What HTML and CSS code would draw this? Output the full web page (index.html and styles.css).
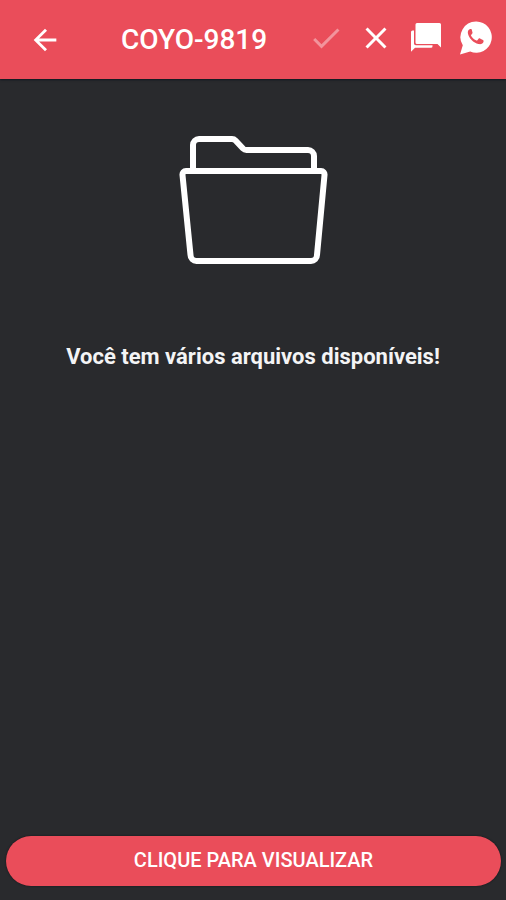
FILE: index.html
```html
<!DOCTYPE html>
<html lang="pt-BR">
<head>
<meta charset="utf-8">
<meta name="viewport" content="width=device-width, initial-scale=1">
<title>COYO-9819</title>
<link rel="stylesheet" href="styles.css">
</head>
<body>
<header class="bar">
  <button class="icon-button" type="button" aria-label="Voltar">
    <svg class="icon icon-back" viewBox="0 0 24 24"><path d="M20 11H7.83l5.59-5.59L12 4l-8 8 8 8 1.41-1.41L7.83 13H20z"/></svg>
  </button>
  <h1 class="title">COYO-9819</h1>
  <div class="actions">
    <button class="icon-button" type="button" aria-label="Confirmar" disabled>
      <svg class="icon" viewBox="0 0 24 24"><path d="M9 16.17 4.83 12l-1.42 1.41L9 19 21 7l-1.41-1.41z"/></svg>
    </button>
    <button class="icon-button" type="button" aria-label="Fechar">
      <svg class="icon" viewBox="0 0 24 24"><path d="M19 6.41 17.59 5 12 10.59 6.41 5 5 6.41 10.59 12 5 17.59 6.41 19 12 13.41 17.59 19 19 17.59 13.41 12z"/></svg>
    </button>
    <button class="icon-button" type="button" aria-label="Mensagens">
      <svg class="icon" viewBox="0 0 36 36"><path d="M9 3H31.500a1.500 1.500 0 0 1 1.500 1.500V27.500L29.500 24H9a1.500 1.500 0 0 1-1.500-1.500v-18A1.500 1.500 0 0 1 9 3z"/><path d="M3 12a1.500 1.500 0 0 1 1.500-1.500H6V23.500a1.800 1.800 0 0 0 1.800 1.800H24.500v1a1.500 1.500 0 0 1-1.500 1.500H7L3 31.800z"/></svg>
    </button>
    <button class="icon-button" type="button" aria-label="WhatsApp">
      <svg class="icon" viewBox="0 0 36 36"><path fill-rule="evenodd" d="M18.300 1.500a15.600 15.600 0 1 1-6.100 30L2 34.500l2.800-9.200A15.600 15.600 0 0 1 18.300 1.500zM13.800 9.800c-.4-.8-1-.7-1.500-.7-2 .6-2.700 2.400-2.400 4.200.7 4.800 5.700 9.700 10.600 10.700 2.500.5 4.600-.3 5-2.300.2-1 .1-1.400-.5-1.800l-3-1.500c-.6-.3-1-.2-1.400.3l-1.200 1.500c-.4.4-.8.4-1.400.1-2.100-.9-3.700-2.500-4.800-4.400-.3-.5-.2-.8.1-1.200l1-1.300c.3-.4.300-.7.100-1.200z"/></svg>
    </button>
  </div>
</header>
<main class="content">
  <svg class="folder" viewBox="0 0 150 130" aria-hidden="true">
    <path d="M15 35V10a6 6 0 0 1 6-6H54a5 5 0 0 1 3.500 1.500L65 13.500a5 5 0 0 0 3.500 1.500H130a6 6 0 0 1 6 6V35"/>
    <path d="M8 36H143a3.500 3.500 0 0 1 3.500 4L139 120a6 6 0 0 1-6 6H18.500a6 6 0 0 1-6-6L4.500 40A3.500 3.500 0 0 1 8 36z"/>
  </svg>
  <p class="message">Você tem vários arquivos disponíveis!</p>
</main>
<footer class="footer">
  <button class="primary" type="button">CLIQUE PARA VISUALIZAR</button>
</footer>
</body>
</html>
```
FILE: styles.css
```css
* {
  box-sizing: border-box;
}

body {
  margin: 0;
  min-height: 100vh;
  display: flex;
  flex-direction: column;
  background: #292a2d;
  color: #fff;
  font-family: Roboto, sans-serif;
  font-weight: 500;
}

.bar {
  display: flex;
  align-items: center;
  height: 79px;
  padding: 0 5px 0 20px;
  background: #ea4d5a;
  box-shadow: 0 1px 2px #101820;
}

.icon-button {
  display: flex;
  align-items: center;
  justify-content: center;
  width: 50px;
  height: 50px;
  padding: 0;
  border: 0;
  background: none;
  color: inherit;
}

.icon-button:disabled {
  opacity: 0.4;
}

.icon {
  width: 36px;
  height: 36px;
  fill: currentColor;
}

.icon-back {
  width: 34px;
  height: 34px;
}

.title {
  flex: 1;
  margin: 0 0 0 51px;
  font-size: 28px;
  line-height: 32px;
  font-weight: 500;
  white-space: nowrap;
}

.actions {
  display: flex;
  padding-bottom: 4px;
}

.content {
  flex: 1;
  display: flex;
  flex-direction: column;
  align-items: center;
  padding: 56px 16px 16px;
}

.folder {
  width: 150px;
  height: 130px;
  fill: none;
  stroke: #fff;
  stroke-width: 6;
}

.message {
  margin: 78px 0 0;
  color: #f4f4f5;
  font-size: 22px;
  line-height: 28px;
  font-weight: 700;
  text-align: center;
}

.footer {
  padding: 0 5px 14px 6px;
}

.primary {
  display: block;
  width: 100%;
  height: 50px;
  padding: 0 16px 2px;
  border: 0;
  border-radius: 25px;
  background: #ea4d5a;
  box-shadow: 0 0 2px #101418;
  color: #fff;
  font: 500 20px/24px Roboto, sans-serif;
}
```
